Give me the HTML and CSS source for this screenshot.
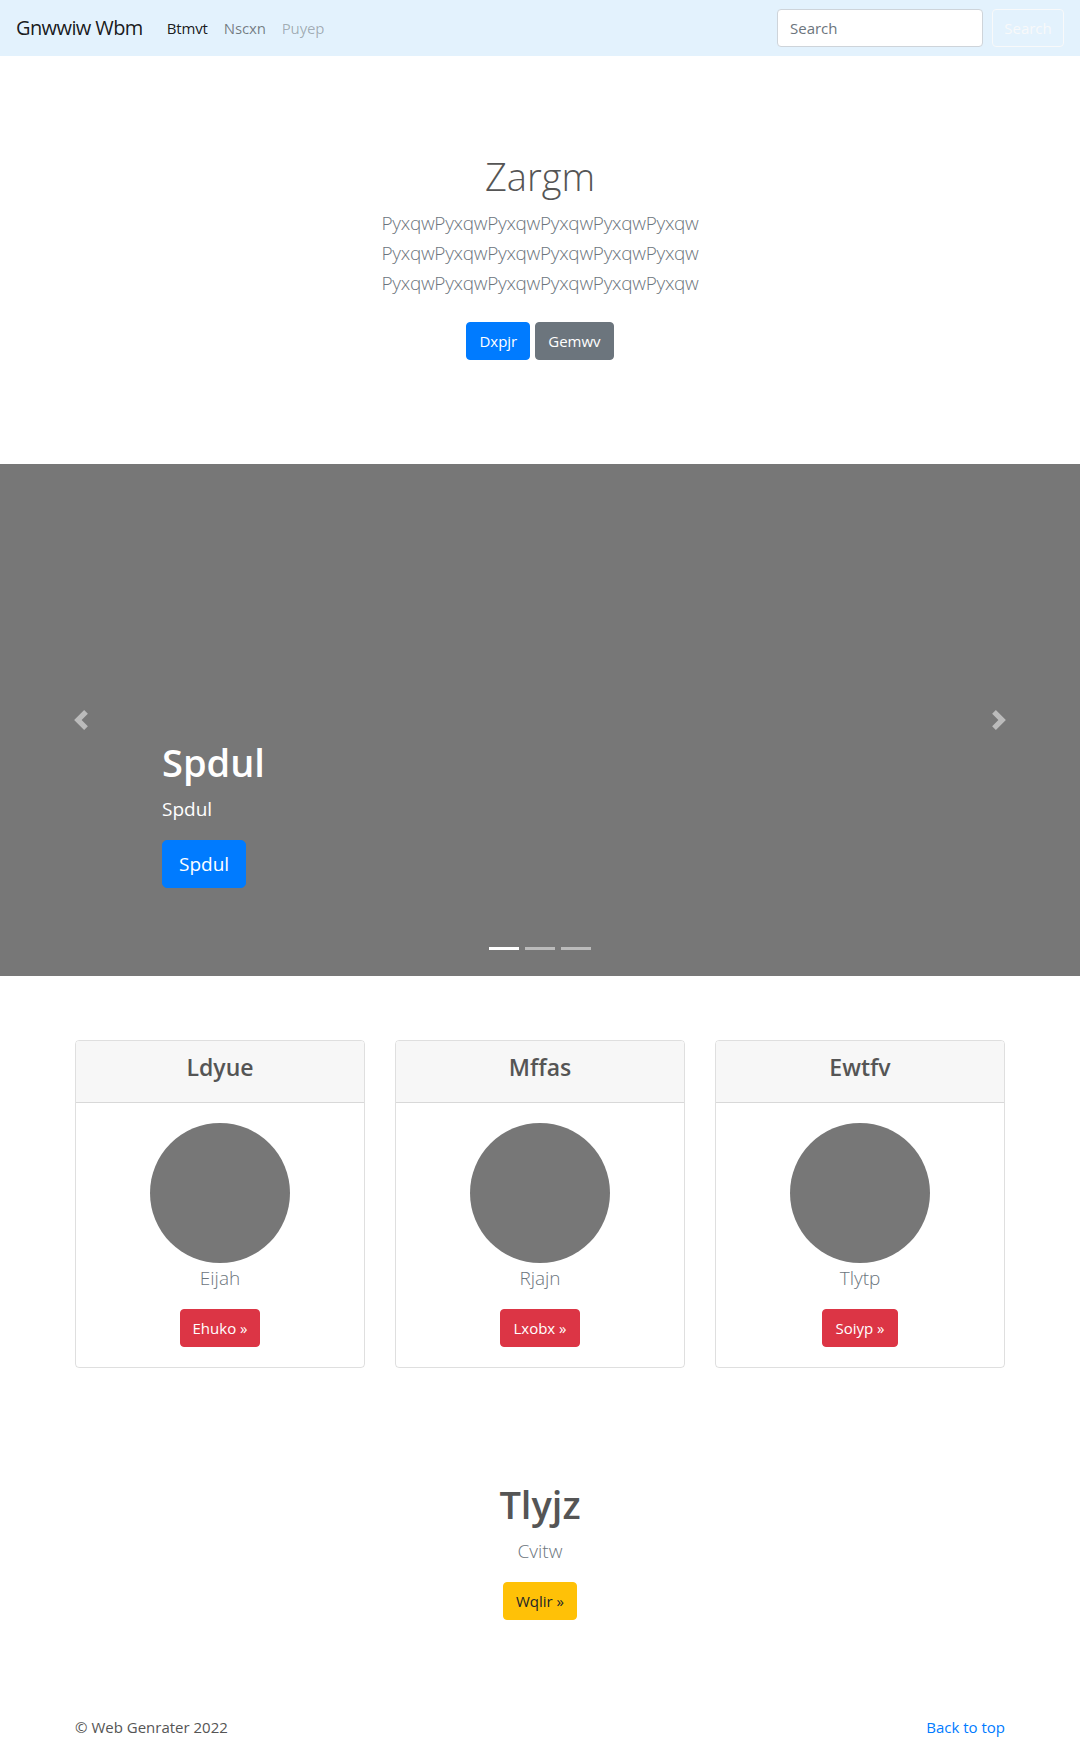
FILE: index.html
```html
<!DOCTYPE html>
<html lang="en">
<head>
<meta charset="utf-8">
<title>Gnwwiw Wbm</title>
<link rel="stylesheet" href="styles.css">
</head>
<body>
<header class="navbar">
  <a class="brand" href="#">Gnwwiw Wbm</a>
  <nav class="nav">
    <a class="nav-link active" href="#">Btmvt</a>
    <a class="nav-link" href="#">Nscxn</a>
    <a class="nav-link disabled" href="#">Puyep</a>
  </nav>
  <form class="search">
    <input class="search-input" type="text" placeholder="Search">
    <button class="search-btn" type="button">Search</button>
  </form>
</header>

<section class="jumbotron">
  <h1 class="jumbo-title">Zargm</h1>
  <p class="lead muted">PyxqwPyxqwPyxqwPyxqwPyxqwPyxqw<br>PyxqwPyxqwPyxqwPyxqwPyxqwPyxqw<br>PyxqwPyxqwPyxqwPyxqwPyxqwPyxqw</p>
  <p class="jumbo-actions">
    <a class="btn btn-primary" href="#">Dxpjr</a>
    <a class="btn btn-secondary" href="#">Gemwv</a>
  </p>
</section>

<section class="carousel">
  <a class="carousel-control prev" href="#">
    <svg class="control-icon" viewBox="0 0 8 8" width="20" height="20"><path fill="#fff" d="M5.25 0l-4 4 4 4 1.5-1.5-2.5-2.5 2.5-2.5-1.5-1.5z"/></svg>
  </a>
  <div class="carousel-caption">
    <h1 class="caption-title">Spdul</h1>
    <p class="caption-text">Spdul</p>
    <p class="caption-actions"><a class="btn btn-lg btn-primary" href="#">Spdul</a></p>
  </div>
  <a class="carousel-control next" href="#">
    <svg class="control-icon" viewBox="0 0 8 8" width="20" height="20"><path fill="#fff" d="M2.75 0l-1.5 1.5 2.5 2.5-2.5 2.5 1.5 1.5 4-4-4-4z"/></svg>
  </a>
  <ol class="indicators">
    <li class="active"></li>
    <li></li>
    <li></li>
  </ol>
</section>

<main class="container">
  <div class="cards">
    <div class="card">
      <div class="card-header"><h4>Ldyue</h4></div>
      <div class="card-body">
        <div class="avatar"></div>
        <p class="lead muted card-lead">Eijah</p>
        <a class="btn btn-danger" href="#">Ehuko »</a>
      </div>
    </div>
    <div class="card">
      <div class="card-header"><h4>Mffas</h4></div>
      <div class="card-body">
        <div class="avatar"></div>
        <p class="lead muted card-lead">Rjajn</p>
        <a class="btn btn-danger" href="#">Lxobx »</a>
      </div>
    </div>
    <div class="card">
      <div class="card-header"><h4>Ewtfv</h4></div>
      <div class="card-body">
        <div class="avatar"></div>
        <p class="lead muted card-lead">Tlytp</p>
        <a class="btn btn-danger" href="#">Soiyp »</a>
      </div>
    </div>
  </div>

  <section class="feature">
    <h1 class="feature-title">Tlyjz</h1>
    <p class="lead muted feature-lead">Cvitw</p>
    <p class="feature-actions"><a class="btn btn-warning" href="#">Wqlir »</a></p>
  </section>

  <footer class="footer">
    <p class="copy">© Web Genrater 2022</p>
    <a class="back" href="#">Back to top</a>
  </footer>
</main>
</body>
</html>
```

FILE: styles.css
```css
* { box-sizing: border-box; }

html, body {
  margin: 0;
  padding: 0;
}

body {
  font-family: "Open Sans", "Noto Sans", "Liberation Sans", sans-serif;
  font-size: 16px;
  line-height: 1.5;
  color: #555;
  background: #fff;
}

a { text-decoration: none; }

h1, h4, p { margin-top: 0; }

/* Navbar */
.navbar {
  display: flex;
  align-items: center;
  height: 56px;
  padding: 0 16px;
  background: #e3f2fd;
}

.brand {
  font-size: 20px;
  line-height: 30px;
  color: rgba(0, 0, 0, 0.9);
  margin-right: 16px;
  letter-spacing: -0.6px;
}

.nav {
  display: flex;
  flex: 1;
}

.nav-link {
  padding: 8px 8px;
  font-size: 15px;
  color: rgba(0, 0, 0, 0.5);
  letter-spacing: -0.15px;
}

.nav-link.active { color: rgba(0, 0, 0, 0.9); }
.nav-link.disabled { color: rgba(0, 0, 0, 0.3); }

.search {
  display: flex;
  align-items: center;
}

.search-input {
  width: 206px;
  height: 38px;
  padding: 6px 12px;
  font: inherit;
  font-size: 15px;
  color: #495057;
  background: #fff;
  border: 1px solid #ced4da;
  border-radius: 4px;
  margin-right: 9px;
}

.search-input::placeholder { color: #6c757d; }

.search-btn {
  width: 72px;
  height: 38px;
  font: inherit;
  font-size: 15px;
  color: #f8f9fa;
  background: transparent;
  border: 1px solid #f8f9fa;
  border-radius: 4px;
  padding: 0;
}

/* Buttons */
.btn {
  display: inline-block;
  padding: 6px 12px;
  font-size: 15px;
  line-height: 24px;
  border: 1px solid transparent;
  border-radius: 4px;
  color: #fff;
  text-align: center;
  vertical-align: middle;
}

.btn-lg {
  padding: 8px 16px;
  font-size: 19px;
  line-height: 30px;
  border-radius: 5px;
}

.btn-primary { background: #007bff; border-color: #007bff; }
.btn-secondary { background: #6c757d; border-color: #6c757d; }
.btn-danger { background: #dc3545; border-color: #dc3545; }
.btn-warning { background: #ffc107; border-color: #ffc107; color: #212529; }

.lead {
  font-size: 19px;
  line-height: 30px;
  font-weight: 300;
}

.muted { color: #6c757d; }

/* Jumbotron */
.jumbotron {
  padding: 96px 0 96px;
  text-align: center;
}

.jumbo-title {
  font-size: 38px;
  line-height: 48px;
  font-weight: 300;
  margin: 0 0 8px;
}

.jumbo-title + .lead {
  margin-bottom: 16px;
  letter-spacing: -0.3px;
}

.jumbo-actions {
  margin: 0;
  display: flex;
  justify-content: center;
  gap: 5px;
  padding: 8px 0;
}

/* Carousel */
.carousel {
  position: relative;
  height: 512px;
  background: #777;
  margin-bottom: 64px;
  display: flex;
  align-items: center;
  justify-content: space-between;
}

.carousel-control {
  width: 15%;
  height: 100%;
  display: flex;
  align-items: center;
  justify-content: center;
  opacity: 0.5;
}

.control-icon { display: block; }

.carousel-caption {
  position: absolute;
  left: 15%;
  right: 15%;
  bottom: 48px;
  padding: 20px 0;
  color: #fff;
}

.caption-title {
  font-size: 38px;
  line-height: 48px;
  font-weight: 600;
  margin: 0 0 8px;
}

.caption-text {
  font-size: 19px;
  line-height: 30px;
  margin: 0 0 16px;
}

.caption-actions {
  display: flex;
  margin: 0 0 20px;
}

.indicators {
  position: absolute;
  left: 0;
  right: 0;
  bottom: 16px;
  margin: 0;
  padding: 0;
  list-style: none;
  display: flex;
  justify-content: center;
}

.indicators li {
  width: 30px;
  height: 23px;
  margin: 0 3px;
  border-top: 10px solid transparent;
  border-bottom: 10px solid transparent;
  background: #fff;
  background-clip: padding-box;
  opacity: 0.5;
}

.indicators li.active { opacity: 1; }

/* Cards */
.container {
  width: 960px;
  margin: 0 auto;
  padding: 0 15px;
}

.cards {
  display: grid;
  grid-template-columns: repeat(3, 1fr);
  gap: 30px;
}

.card {
  border: 1px solid rgba(0, 0, 0, 0.125);
  border-radius: 4px;
  overflow: hidden;
  text-align: center;
}

.card-header {
  padding: 12px 20px;
  background: #f7f7f7;
  border-bottom: 1px solid rgba(0, 0, 0, 0.125);
}

.card-header h4 {
  margin: 0 0 8px;
  font-size: 23px;
  line-height: 28.8px;
  font-weight: 600;
}

.card-body {
  padding: 20px;
  display: flex;
  flex-direction: column;
  align-items: center;
}

.avatar {
  width: 140px;
  height: 140px;
  border-radius: 50%;
  background: #777;
}

.card-lead { margin: 0 0 16px; }

/* Feature */
.feature {
  text-align: center;
  padding-top: 112px;
}

.feature-title {
  font-size: 38px;
  line-height: 48px;
  font-weight: 600;
  margin: 0 0 8px;
}

.feature-lead { margin: 0 0 16px; }

.feature-actions { margin: 0; display: flex; justify-content: center; }

/* Footer */
.footer {
  display: flex;
  justify-content: space-between;
  align-items: baseline;
  padding-top: 95px;
  padding-bottom: 48px;
  font-size: 15px;
  line-height: 24px;
}

.copy { margin: 0; }

.back { color: #007bff; }
```
